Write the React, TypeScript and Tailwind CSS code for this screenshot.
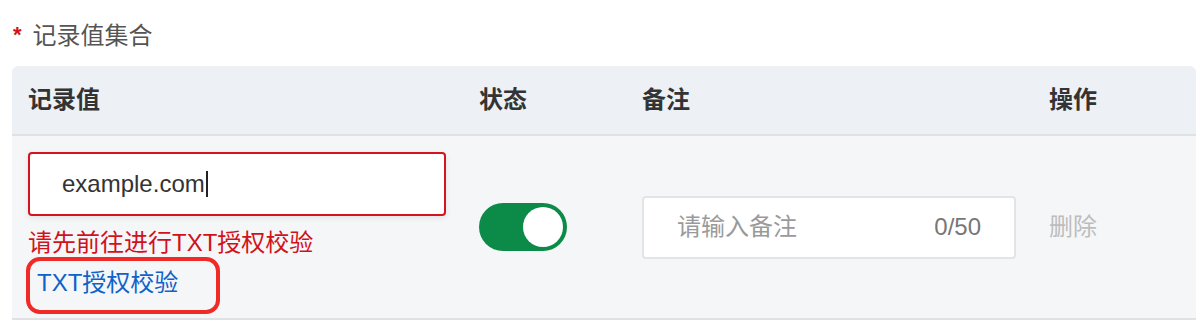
import React from 'react';

const font = { fontFamily: '"Liberation Sans", "Noto Sans CJK SC", sans-serif' };

function Toggle({ on }: { on: boolean }) {
  return (
    <div className={`flex h-[48px] w-[88px] items-center rounded-full px-[4px] ${on ? 'justify-end bg-[#0b8a48]' : 'justify-start bg-[#cfd3d8]'}`}>
      <div className="h-[40px] w-[40px] rounded-full bg-white" />
    </div>
  );
}

export default function App() {
  return (
    <div className="h-[324px] w-[1196px] overflow-hidden bg-white text-[24px]" style={font}>
      <div className="flex h-[66px] items-center pl-[13px] pt-[6px]">
        <span className="mr-[11px] mt-[-4px] text-[22px] font-bold text-[#d0121b]">*</span>
        <span className="text-[#555]">记录值集合</span>
      </div>

      <div className="ml-[12px]">
        <div className="grid grid-cols-[451px_163px_407px_1fr] h-[70px] items-center rounded-t-[6px] border-b-2 border-[#dfe1e5] bg-[#edf0f4] font-semibold text-[#333]">
          <div className="pl-4">记录值</div>
          <div className="pl-4">状态</div>
          <div className="pl-4">备注</div>
          <div className="pl-4">操作</div>
        </div>

        <div className="grid grid-cols-[451px_163px_407px_1fr] h-[184px] items-center border-b-2 border-[#dfe1e5] bg-[#f5f6f8]">
          <div className="flex h-full flex-col pl-4 pt-[16px]">
            <div className="flex h-[64px] w-[418px] items-center rounded-[4px] border-2 border-[#d4141c] bg-white pl-[32px] text-[#333] shadow-[0_2px_6px_rgba(0,0,0,0.08)]">
              <span>example.com</span>
              <span className="ml-[1px] h-[26px] w-[2px] bg-[#222]" />
            </div>
            <div className="mt-[13px] leading-[28px] text-[#d0121b]">请先前往进行TXT授权校验</div>
            <div className="mt-[8px] pl-[9px]">
              <span className="relative inline-block leading-[28px] text-[#0f62c8]">
                TXT授权校验
                <span className="absolute left-[-11px] top-[-12px] h-[57px] w-[194px] rounded-[14px] border-[4px] border-[#f02a26]" />
              </span>
            </div>
          </div>

          <div className="pl-4">
            <Toggle on />
          </div>

          <div className="pl-4">
            <div className="flex h-[63px] w-[374px] items-center justify-between rounded-[4px] border-2 border-[#e2e4e8] bg-white pl-[33px] pr-[33px]">
              <span className="text-[#9a9a9a]">请输入备注</span>
              <span className="text-[#777]">0/50</span>
            </div>
          </div>

          <div className="pl-4 text-[#bdbdbd]">删除</div>
        </div>
      </div>
    </div>
  );
}
